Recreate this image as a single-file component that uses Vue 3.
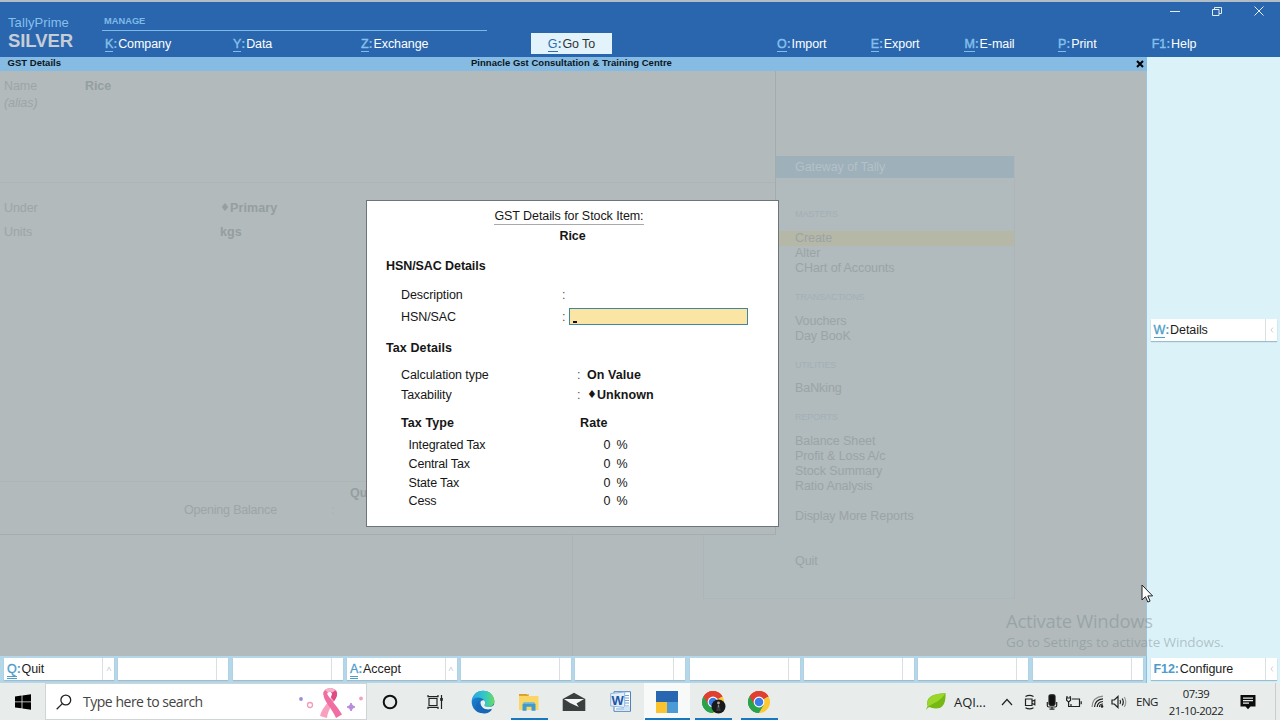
<template>
  <div class="screen">
    <header class="topbar">
      <div class="brand">
        <span class="brand-name">TallyPrime</span>
        <span class="brand-edition">SILVER</span>
      </div>
      <div class="manage">
        <div class="manage-title">MANAGE</div>
        <nav class="manage-menu">
          <span v-for="m in manageMenu" :key="m.key" class="menu-item"><b class="hot">{{ m.key }}</b><b class="colon">:</b>{{ m.label }}</span>
        </nav>
      </div>
      <button class="goto"><span class="hot">G</span><b class="colon">:</b>Go To</button>
      <div class="top-right">
        <div class="win-controls">
          <svg width="12" height="12" viewBox="0 0 12 12"><path d="M1 6.5h10" /></svg>
          <svg width="12" height="12" viewBox="0 0 12 12"><path d="M1.5 4.5h6.5v6h-6.500zM3.500 4.500v-2h7v6h-2.500" /></svg>
          <svg width="12" height="12" viewBox="0 0 12 12"><path d="M1.500 1.500l9 9M10.500 1.500l-9 9" /></svg>
        </div>
        <nav class="right-menu">
          <span v-for="m in rightMenu" :key="m.key" class="menu-item"><b class="hot" :class="{ plain: m.key === 'F1' }">{{ m.key }}</b><b class="colon">:</b>{{ m.label }}</span>
        </nav>
      </div>
    </header>

    <div class="main">
      <section class="left">
        <div class="titlebar">
          <span class="title-left">GST Details</span>
          <span class="title-center">Pinnacle Gst Consultation &amp; Training Centre</span>
          <svg class="title-close" width="8" height="8" viewBox="0 0 8 8"><path d="M1 1l6 6M7 1l-6 6" /></svg>
        </div>

        <div class="workspace">
          <!-- Gateway menu, behind the stock item window -->
          <div class="gateway">
            <div class="gateway-title">Gateway of Tally</div>
            <div v-for="(g, i) in gateway" :key="i" class="gateway-group">
              <div v-if="g.title" class="group-title">{{ g.title }}</div>
              <div v-for="item in g.items" :key="item" class="gateway-item" :class="{ active: item === 'Create' }">{{ item }}</div>
            </div>
          </div>
          <div class="base-split"></div>

          <!-- Stock item window -->
          <div class="stock">
            <div class="stock-head">
              <div class="faded-row"><span class="name-label">Name</span><b>Rice</b></div>
              <div class="faded-row"><i>(alias)</i></div>
            </div>
            <div class="stock-body">
              <div class="faded-row"><span class="unit-label">Under</span><b><span class="dia">♦</span>Primary</b></div>
              <div class="faded-row"><span class="unit-label">Units</span><b>kgs</b></div>
            </div>
            <div class="stock-foot">
              <b class="quantity">Quantity</b>
              <div class="opening"><span>Opening Balance</span><span class="faint">:</span></div>
            </div>
          </div>

          <!-- GST details dialog -->
          <div class="dialog">
            <div class="row heading title"><span class="underlined">GST Details for Stock Item:</span></div>
            <div class="row heading"><b>Rice</b></div>
            <div class="row section hsn"><b>HSN/SAC Details</b></div>
            <div class="row field desc"><span class="label">Description</span><span class="sep">:</span></div>
            <div class="row field code"><span class="label">HSN/SAC</span><span class="sep">:</span><span class="input"><i class="caret"></i></span></div>
            <div class="row section tax"><b>Tax Details</b></div>
            <div class="row field calc"><span class="label wide">Calculation type</span><span class="sep">:</span><b class="value">On Value</b></div>
            <div class="row field"><span class="label wide">Taxability</span><span class="sep">:</span><b class="value"><span class="dia">♦</span>Unknown</b></div>
            <div class="row field types"><b class="type-head">Tax Type</b><b>Rate</b></div>
            <div class="rates">
              <div v-for="r in rates" :key="r.name" class="rate">
                <span class="rate-name">{{ r.name }}</span>
                <span class="rate-value">{{ r.value }}</span>
                <span>%</span>
              </div>
            </div>
          </div>
        </div>

        <div class="bottombar">
          <div v-for="(b, i) in bottomButtons" :key="i" class="fbutton">
            <span class="fbody"><template v-if="b"><b class="hot double">{{ b.key }}</b><b class="colon">:</b>{{ b.label }}</template></span>
            <span class="fmore"><svg v-if="b" width="6" height="6" viewBox="0 0 6 6"><path d="M1 5l2-4 2 4" /></svg></span>
          </div>
        </div>
      </section>

      <aside class="side">
        <div class="fbutton details">
          <span class="fbody"><b class="hot">W</b><b class="colon">:</b>Details</span>
          <span class="fmore"><svg width="6" height="6" viewBox="0 0 6 6"><path d="M4 0.500l-2 2.500 2 2.500" /></svg></span>
        </div>
        <div class="fbutton configure">
          <span class="fbody"><b class="hot plain">F12</b><b class="colon">:</b>Configure</span>
          <span class="fmore"><svg width="6" height="6" viewBox="0 0 6 6"><path d="M4 0.500l-2 2.500 2 2.500" /></svg></span>
        </div>
      </aside>
    </div>

    <div class="watermark">
      <div class="wm-title">Activate Windows</div>
      <div class="wm-text">Go to Settings to activate Windows.</div>
    </div>
    <svg class="cursor" width="13" height="20" viewBox="0 0 13 20"><path d="M1 1v15l3.500-3.300 2.300 5.400 2.300-1-2.300-5.200h4.800z" /></svg>

    <footer class="taskbar">
      <div class="start">
        <svg width="16" height="16" viewBox="0 0 16 16"><path d="M0 2.400l6.600-.9v6H0zM7.400 1.400L16 .2v7.300H7.400zM0 8.300h6.600v6L0 13.400zM7.400 8.300H16v7.400l-8.600-1.200z" /></svg>
      </div>
      <div class="search">
        <svg class="lens" width="16" height="16" viewBox="0 0 16 16"><circle cx="9.800" cy="6" r="4.900" /><path d="M6.300 9.600L.7 15.200" /></svg>
        <span class="search-text">Type here to search</span>
        <svg class="ribbon" width="66" height="34" viewBox="0 0 66 34">
          <circle cx="3" cy="14" r="1.900" fill="#9a8fdc" />
          <circle cx="12" cy="20" r="2.500" fill="none" stroke="#f09cba" stroke-width="1.300" />
          <path d="M25.500 10C23 1 41 1 39 10c-1 5-9 13-10 23l-7-2C24 22 33.500 15 34 9c0-3-5-3-5 0z" fill="#f9a0c1" />
          <path d="M25.500 10c0 6 9 14 12.500 23l6-3.500C40 22 31 13 29.200 9c0-3 4.500-3 4.800 0 0 1.500-.3 2-1 3l3 4c1.500-2 2.500-4 3-6 2-9-15-9-13.500 0z" fill="#ef6fa2" />
          <path d="M35 4.500q4.500 2 4 5.500-.5 3-3 6l-3-4c1.500-2 1.500-5-.5-5.300z" fill="#df4a84" />
          <path d="M27 5q5-4 10.500 0l-3 2.500q-2.500-1.500-4.500 0z" fill="#f7b3cc" />
          <path d="M53 18l1.300 2.500L57 22l-2.500 1.300L53 26l-1.300-2.600L49 22l2.700-1.300z" fill="#b78be0" stroke="#b78be0" />
          <circle cx="63" cy="13.500" r="1.900" fill="#f3a0bd" />
        </svg>
      </div>

      <div class="apps">
        <div class="app cortana"><svg width="16" height="16" viewBox="0 0 16 16"><circle cx="8" cy="8" r="6.300" fill="none" stroke="#111" stroke-width="2" /></svg></div>
        <div class="app">
          <svg width="17" height="16" viewBox="0 0 17 16" fill="none" stroke="#222" stroke-width="1.200"><path d="M2 4.500h8v7H2zM1 1v1.700h10V1M1 15v-1.700h10V15M14.500 1v14" /><path d="M13.200 4h2.600v2.800h-2.600z" fill="#222" stroke="none" /></svg>
        </div>
        <div class="app">
          <svg width="24" height="24" viewBox="0 0 24 24">
            <defs>
              <linearGradient id="edgeTop" x1="0" x2="1"><stop offset="0" stop-color="#2aa5e0" /><stop offset=".6" stop-color="#34c9c4" /><stop offset="1" stop-color="#6bdc5c" /></linearGradient>
              <linearGradient id="edgeLow" x1="0" x2="1" y1="0" y2="1"><stop offset="0" stop-color="#1b8fdc" /><stop offset="1" stop-color="#0d4e9e" /></linearGradient>
            </defs>
            <circle cx="12" cy="12" r="11.300" fill="url(#edgeLow)" />
            <path d="M.8 11C1.500 4.500 6.500.7 12 .7c6.600 0 11.300 4.800 11.300 10.300 0 4-3 6-6 6-2.800 0-4.300-1.200-3.800-2 1.200-1.500 1-3.200 0-4.500C10.500 6.500 3 6.500.8 11z" fill="url(#edgeTop)" />
            <path d="M9.500 12.500c0 5.200 5.300 8.200 10.800 6.500l2.500-.5 1.200-4.500c-2 2.500-4.500 3-6.700 3-2.800 0-4.300-1.200-3.800-2 1.200-1.500.8-3.700-.5-4.700-2-.4-3.500.6-3.500 2.200z" fill="#eaf0f1" />
            <path d="M8 13c0 6 6 9 13 6.500C17 25 9 24.500 6 19c-1.500-3 0-8 5-9-2 .5-3 1.500-3 3z" fill="#1668b8" />
          </svg>
        </div>
        <div class="app open">
          <svg width="20" height="20" viewBox="0 0 20 20"><path d="M0 2h8l2 2H0z" fill="#d9a029" /><path d="M0 4h19.500v14H0z" fill="#fbd665" /><path d="M0 3.500h8.500L10 2.500" stroke="#dca53a" fill="none" /><path d="M3.500 18.800v-6.500L5 10.500h10l1.500 1.800v6.500h-4v-4h-5v4z" fill="#3e9bd0" /><path d="M5 10.500h10l.9 1.200H4z" fill="#79c3e4" /></svg>
        </div>
        <div class="app mail">
          <svg width="24" height="20" viewBox="0 0 24 20"><path d="M.7 7L12 .8 23.300 7v12H.7z" fill="#3c3f40" /><path d="M2 7h20l-7.500 4.600 2.300 3.400L8 11z" fill="#f4f6f6" /></svg>
        </div>
        <div class="app">
          <svg width="22" height="22" viewBox="0 0 22 22"><path d="M4 .7h16.500v19.600H4z" fill="#fff" stroke="#4d82bd" /><path d="M15 4.500h4M15 7h4M15 9.500h4M15 12h4M13 15h6M6 18h12" stroke="#75a6d8" /><path d="M.7 2.500l14-1.500v15.500l-14-1.500z" fill="#e3effa" stroke="#8db5de" /><text x="1.500" y="14" class="word-w">W</text><path d="M14 15.500h6v4h-6z" fill="#d5e4f2" /></svg>
        </div>
        <div class="app open current">
          <svg width="22" height="22" viewBox="0 0 22 22"><path d="M0 0h22v11H0z" fill="#2966b1" /><path d="M0 11h11v11H0z" fill="#fbc42f" /><path d="M11 11h11v11H11z" fill="#4b9bd6" /></svg>
        </div>
        <div v-for="n in 2" :key="n" class="app open">
          <svg width="25" height="24" viewBox="0 0 25 24">
            <path d="M12 12L2.470 6.500A11 11 0 0 1 21.530 6.500z" fill="#e0402f" />
            <path d="M12 12L21.530 6.500A11 11 0 0 1 12 23z" fill="#fcc934" />
            <path d="M12 12v11A11 11 0 0 1 2.470 6.500z" fill="#2ba24c" />
            <path d="M12 6.500h9.530a11 11 0 0 0-19-.1l4.700 8.200z" fill="#e0402f" />
            <path d="M7.200 14.800l-4.700-8.300A11 11 0 0 0 12 23l4.800-8.300z" fill="#2ba24c" />
            <circle cx="12" cy="12" r="5.400" fill="#fff" /><circle cx="12" cy="12" r="4.300" fill="#3b7de9" />
            <template v-if="n === 1"><circle cx="17.500" cy="16.500" r="7" fill="#17191b" /><circle cx="17.500" cy="13" r="1.400" fill="#b7a496" /><path d="M15.300 21l.8-5.500h2.800l.8 5.500z" fill="#34383a" /><path d="M17.200 15.200l.8 0-.3 3z" fill="#ddd" /></template>
          </svg>
        </div>
      </div>

      <div class="tray">
        <svg class="leaf" width="20" height="18" viewBox="0 0 20 18"><path d="M19.500 0c.5 9-2 15.500-9.500 15.500-3 0-5-.8-6.500-1.500C.5 15 .8 17 .8 17 0 16 .6 14.500 1.600 13.500-.5 4 6 1 19.500 0z" fill="#76b814" /><path d="M19.500 0C15 8 8 10 2 13.500 0 4.500 6 1 19.500 0z" fill="#9ad62c" /></svg>
        <span class="aqi">AQI...</span>
        <svg class="t-caret" width="12" height="8" viewBox="0 0 12 8"><path d="M1 7l5-5.500L11 7" /></svg>
        <svg class="t-cam" width="12" height="16" viewBox="0 0 12 16"><path d="M1.500 5h6.500v6.500H1.500zM8 7.500L10.800 6v4.700L8 9.200M1.500 2.500q4-2.300 8 0M1.500 13.800q4 2.300 8 0" /></svg>
        <svg class="t-mic" width="12" height="16" viewBox="0 0 12 16"><rect x="3" y=".8" width="6" height="10.500" rx="1.500" fill="#111" /><path d="M1.300 8v3.500q0 1.500 1.500 1.500h6.400q1.500 0 1.500-1.500V8M6 13v2M3.500 15.200h5" /></svg>
        <svg class="t-bat" width="16" height="12" viewBox="0 0 16 12"><path d="M6 3h7.500v7.500H5V8M15.200 5.300v3M1 0v2M4.200 0v2M.6 2h4v2.300L3 5.700H2.200L.6 4.300zM2.600 5.500v5h2" /></svg>
        <svg class="t-wifi" width="13" height="13" viewBox="0 0 13 13"><path d="M1 12Q1.500 2 12 1.200" stroke="#888" /><path d="M3.500 12Q4 4.500 12 3.800M6.200 12Q6.500 7 12 6.500M8.500 12Q8.500 9 12 9" /><circle cx="11" cy="11.400" r="1.300" fill="#222" stroke="none" /></svg>
        <svg class="t-vol" width="16" height="14" viewBox="0 0 16 14"><path d="M1 5h2.300L7 1.500v11L3.300 9H1z" /><path d="M9 5q1.200 2 0 4M11.200 3.500q2.200 3.500 0 7" /><path d="M13.300 2q3 5 0 10" stroke="#999" /></svg>
        <span class="lang">ENG</span>
        <div class="clock"><span>07:39</span><span>21-10-2022</span></div>
        <svg class="t-note" width="16" height="16" viewBox="0 0 16 16"><path d="M.5 1h15v11.500h-5L8 15.200l-2.500-2.700h-5z" fill="#0c0c0c" stroke="none" /><path d="M3 4.200h10M3 6.700h10M3 9.200h6" stroke="#e9eded" /></svg>
      </div>
    </footer>
  </div>
</template>

<script setup>
const manageMenu = [
  { key: 'K', label: 'Company' },
  { key: 'Y', label: 'Data' },
  { key: 'Z', label: 'Exchange' }
]

const rightMenu = [
  { key: 'O', label: 'Import' },
  { key: 'E', label: 'Export' },
  { key: 'M', label: 'E-mail' },
  { key: 'P', label: 'Print' },
  { key: 'F1', label: 'Help' }
]

const gateway = [
  { title: 'MASTERS', items: ['Create', 'Alter', 'CHart of Accounts'] },
  { title: 'TRANSACTIONS', items: ['Vouchers', 'Day BooK'] },
  { title: 'UTILITIES', items: ['BaNking'] },
  { title: 'REPORTS', items: ['Balance Sheet', 'Profit & Loss A/c', 'Stock Summary', 'Ratio Analysis'] },
  { items: ['Display More Reports'] },
  { items: ['Quit'] }
]

const rates = [
  { name: 'Integrated Tax', value: 0 },
  { name: 'Central Tax', value: 0 },
  { name: 'State Tax', value: 0 },
  { name: 'Cess', value: 0 }
]

const bottomButtons = [
  { key: 'Q', label: 'Quit' }, null, null,
  { key: 'A', label: 'Accept' }, null, null, null, null, null, null
]
</script>

<style>
body {
  margin: 0;
  overflow: hidden;
}
</style>

<style scoped>
.screen {
  position: relative;
  display: flex;
  flex-direction: column;
  width: 1280px;
  height: 720px;
  overflow: hidden;
  box-sizing: border-box;
  font-family: "Liberation Sans", Arial, sans-serif;
  font-size: 12.500px;
  letter-spacing: -0.080px;
  color: #1b1b1b;
  white-space: nowrap;
}
.screen * {
  box-sizing: border-box;
}

/* top bar */
.topbar {
  display: flex;
  height: 57px;
  flex: none;
  background: #2966ae;
  border-top: 2px solid #b3bdc6;
  color: #fff;
}
.brand {
  width: 102px;
  padding: 12px 0 0 8px;
  display: flex;
  flex-direction: column;
}
.brand-name {
  font-size: 13px;
  line-height: 17px;
  letter-spacing: 0.1px;
  color: #86c0ec;
}
.brand-edition {
  font-size: 18.500px;
  line-height: 20px;
  font-weight: bold;
  color: #c6cdd6;
}
.manage {
  width: 385px;
}
.manage-title {
  height: 29px;
  padding: 13px 0 0 2px;
  border-bottom: 1px solid #7db9e6;
  font-size: 9.300px;
  font-weight: bold;
  line-height: 12px;
  letter-spacing: 0;
  color: #7fbae8;
}
.manage-menu {
  display: grid;
  grid-template-columns: repeat(3, 128px);
  padding: 5px 0 0 3px;
}
.menu-item {
  line-height: 16px;
}
.hot {
  display: inline-block;
  line-height: 13px;
  border-bottom: 1px solid #7fbdec;
  color: #86c0ec;
}
.menu-item .hot {
  font-weight: normal;
  -webkit-text-stroke: 0.4px #86c0ec;
}
.hot.plain {
  border-bottom-color: transparent;
}
.colon {
  margin-right: 0.800px;
  color: #86c0ec;
}
.goto {
  width: 81px;
  height: 21px;
  margin: 31px 0 0 44px;
  padding: 0;
  border: 0;
  background: #e2f3fb;
  font: inherit;
  letter-spacing: inherit;
  line-height: 20px;
  color: #333;
}
.goto .hot,
.goto .colon {
  color: #2f6fb0;
  border-color: #2f6fb0;
}
.top-right {
  flex: 1;
  padding-left: 165px;
}
.win-controls {
  display: flex;
  justify-content: flex-end;
  gap: 30px;
  height: 34px;
  padding: 3px 15px 0 0;
}
.win-controls svg {
  fill: none;
  stroke: #e4edf7;
  stroke-width: 1;
}
.right-menu {
  display: grid;
  grid-template-columns: repeat(5, 93.700px);
}

/* work area */
.main {
  display: flex;
  height: 626px;
  flex: none;
}
.left {
  display: flex;
  flex-direction: column;
  width: 1147px;
}
.titlebar {
  display: flex;
  align-items: center;
  height: 14px;
  background: #86bbe3;
  font-size: 9.500px;
  font-weight: bold;
  letter-spacing: 0.020px;
  color: #0c1620;
  line-height: 12px;
  padding-bottom: 2px;
}
.title-left {
  width: 471px;
  padding-left: 7.500px;
}
.title-center {
  flex: 1;
}
.title-close {
  margin: 2px 3px 0 0;
  stroke: #000;
  stroke-width: 2;
}
.workspace {
  position: relative;
  height: 585px;
  background: #b2babb;
  border-right: 1px solid #9fc3dc;
  overflow: hidden;
}
.gateway {
  position: absolute;
  left: 703px;
  top: 85px;
  width: 312px;
  height: 443px;
  border-right: 1px solid #acb5b8;
  border-bottom: 1px solid #adb6b9;
  border-left: 1px solid #acb5b8;
  background: #b1babc;
  color: #9aa4a7;
}
.gateway-title {
  height: 22px;
  margin-bottom: 28px;
  padding-left: 91px;
  background: #9eb0ba;
  color: #b4c1c8;
  line-height: 23px;
}
.gateway-group {
  margin-bottom: 15px;
}
.gateway-item {
  height: 15px;
  padding-left: 91px;
  line-height: 15px;
}
.gateway-item.active {
  background: #b5b8a6;
}
.group-title {
  height: 15px;
  margin-bottom: 10px;
  padding-left: 91px;
  font-size: 9px;
  line-height: 16px;
  color: #a2b0b8;
}
.gateway-group + .gateway-group .group-title {
  height: 12.700px;
  line-height: 12px;
}
.gateway-group:last-child {
  margin-top: 30px;
}
.base-split {
  position: absolute;
  left: 572px;
  top: 463px;
  width: 1px;
  height: 122px;
  background: #acb4b6;
}
.stock {
  position: relative;
  width: 776px;
  height: 464px;
  border-right: 1px solid #a4acae;
  border-bottom: 1px solid #a5adaf;
  background: #b2babb;
  color: #9da5a7;
}
.stock b {
  color: #959ea0;
}
.stock .faint {
  color: #a8b0b2;
}
.faded-row {
  display: flex;
  height: 17px;
  line-height: 17px;
}
.stock-head {
  height: 112px;
  padding: 7px 0 0 4px;
  border-bottom: 1px solid #adb5b6;
}
.name-label {
  width: 81px;
}
.stock-body {
  height: 299px;
  padding: 17px 0 0 4px;
  border-bottom: 1px solid #adb5b6;
}
.stock-body .faded-row {
  margin-bottom: 7px;
}
.unit-label {
  width: 216px;
}
.stock-body b {
  letter-spacing: 0.100px;
}
.stock-foot {
  padding-top: 3px;
}
.quantity {
  display: block;
  padding-left: 350px;
  line-height: 16px;
}
.opening {
  display: flex;
  padding-left: 184px;
  line-height: 19px;
  letter-spacing: -0.200px;
}
.opening span:first-child {
  width: 147px;
}
.dia {
  display: inline-block;
  width: 10px;
  font-family: "DejaVu Sans", sans-serif;
  font-size: 11px;
  line-height: 10px;
  vertical-align: 1px;
}

/* dialog */
.dialog {
  position: absolute;
  left: 366px;
  top: 129px;
  width: 413px;
  height: 327px;
  padding-top: 5px;
  border: 1px solid #6c7577;
  background: #fff;
  color: #161616;
}
.row {
  display: flex;
  align-items: center;
  height: 20px;
}
.row.heading {
  justify-content: center;
}
.row.heading.title {
  padding-right: 7px;
}
.underlined {
  height: 18px;
  line-height: 18px;
  border-bottom: 1px solid #a9a9a9;
}
.row.section {
  padding-left: 19px;
}
.row.field {
  padding-left: 34px;
}
.row.hsn { margin-top: 10px; }
.row.desc { margin-top: 9px; }
.row.code { margin-top: 2px; }
.row.tax { margin-top: 11px; letter-spacing: 0.100px; }
.row.calc { margin-top: 7px; }
.row.types { margin-top: 8px; letter-spacing: 0.100px; }
.value {
  letter-spacing: 0.050px;
}
.label {
  width: 161px;
}
.label.wide {
  width: 176px;
}
.sep {
  width: 7px;
  color: #555;
}
.wide + .sep {
  width: 10px;
}
.input {
  display: flex;
  align-items: flex-end;
  width: 179px;
  height: 17px;
  margin-bottom: 1px;
  padding: 0 0 1px 3px;
  border: 1px solid #3f86a0;
  background: #fbe5a5;
}
.caret {
  width: 4px;
  height: 2px;
  background: #111;
}
.type-head {
  width: 179px;
}
.rates {
  padding: 3px 0 0 41.500px;
}
.rate {
  display: flex;
  height: 18.750px;
  line-height: 19px;
}
.rate-name {
  width: 195px;
  letter-spacing: -0.150px;
}
.rate-value {
  width: 13px;
}

/* buttons */
.bottombar {
  display: flex;
  gap: 4.300px;
  height: 27px;
  padding: 2px 0 0 4px;
  border-right: 1px solid #8fbfe0;
  background: #b4d7ea;
}
.fbutton {
  display: flex;
  width: 110px;
  height: 22px;
  background: #fff;
  box-shadow: 0 1px 1px #9fbccd;
}
.fbody {
  flex: 1;
  padding: 3px 0 0 3px;
  line-height: 16px;
}
.fbutton .hot {
  color: #4d9cc9;
  border-color: #4d9cc9;
}
.fbutton .hot.double {
  border-bottom: 3px double #4d9cc9;
}
.fbutton .hot.plain {
  border-color: transparent;
}
.fbutton .hot:not(.plain) {
  font-weight: normal;
  -webkit-text-stroke: 0.3px #4d9cc9;
}
.fbutton .colon {
  color: #4d9cc9;
}
.fmore {
  display: flex;
  align-items: center;
  justify-content: center;
  width: 12px;
  border-left: 1px solid #d9dfe2;
}
.fmore svg {
  fill: none;
  stroke: #c3c8cb;
  stroke-width: 0.800;
}
.side {
  display: flex;
  flex-direction: column;
  justify-content: space-between;
  width: 133px;
  padding: 262px 0 3px 4px;
  background: #daf2f8;
}
.side .fbutton {
  width: 126px;
}
.side .fbody {
  padding-left: 2.500px;
}

/* overlays */
.watermark {
  position: absolute;
  left: 1006px;
  top: 609px;
  font-family: "Open Sans", "Noto Sans", sans-serif;
  color: rgba(125, 138, 145, 0.480);
}
.wm-title {
  font-size: 18.500px;
  line-height: 24px;
  letter-spacing: -0.320px;
}
.wm-text {
  font-size: 13.500px;
  line-height: 18px;
  letter-spacing: -0.100px;
}
.cursor {
  position: absolute;
  left: 1141px;
  top: 584px;
  fill: #fff;
  stroke: #222;
  stroke-width: 1;
}

/* taskbar */
.taskbar {
  display: flex;
  height: 37px;
  flex: none;
  background: #e8edec;
  font-family: "Open Sans", "Noto Sans", sans-serif;
  color: #222;
}
.start {
  display: flex;
  align-items: center;
  justify-content: center;
  width: 45px;
}
.search {
  display: flex;
  align-items: center;
  width: 322px;
  border: 1px solid #cfd4d5;
  background: #fff;
}
.lens {
  margin-left: 10px;
  fill: none;
  stroke: #222;
  stroke-width: 1.300;
}
.search-text {
  width: 215px;
  margin-left: 11px;
  font-size: 14px;
  letter-spacing: -0.480px;
  color: #444;
}
.apps {
  display: flex;
}
.app {
  display: flex;
  align-items: center;
  justify-content: center;
  width: 46px;
}
.app:nth-child(2) {
  margin-right: 2px;
}
.app.mail {
  padding-right: 2px;
}
.app.cortana {
  width: 45px;
}
.app.open {
  background: linear-gradient(#1878bf, #1878bf) center bottom / 37px 2px no-repeat;
}
.app.current {
  background: linear-gradient(#1878bf, #1878bf) center bottom / 45px 2px no-repeat, #f8fafa;
}
.word-w {
  font: bold 13px "Liberation Sans", sans-serif;
  fill: #1f56a5;
}
.tray {
  display: flex;
  align-items: center;
  flex: 1;
  margin-right: 4px;
  padding-left: 144px;
  border-right: 1px solid #c8cecf;
}
.tray svg {
  flex: none;
  fill: none;
  stroke: #222;
  stroke-width: 1.200;
}
.tray .leaf {
  stroke: none;
}
.aqi {
  width: 47px;
  margin-left: 8px;
  font-size: 13px;
}
.t-cam { margin-left: 11px; }
.t-mic { margin-left: 10px; }
.t-bat { margin-left: 8px; }
.t-wifi { margin-left: 9px; }
.t-vol { margin-left: 7px; }
.lang {
  width: 24px;
  margin-left: 9px;
  font-size: 11.500px;
  letter-spacing: -0.500px;
}
.clock {
  display: flex;
  flex-direction: column;
  align-items: center;
  width: 56px;
  margin-left: 8px;
  font-size: 11.300px;
  line-height: 17px;
  letter-spacing: -0.450px;
}
.t-note {
  margin-left: 16px;
}
</style>
